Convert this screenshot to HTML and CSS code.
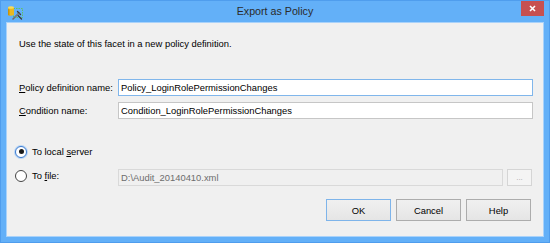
FILE: index.html
```html
<!DOCTYPE html>
<html lang="en">
<head>
<meta charset="UTF-8">
<meta name="viewport" content="width=device-width, initial-scale=1.0">
<title>Export as Policy</title>
<link rel="stylesheet" href="styles.css">
</head>
<body>
<div class="window">
    <div class="titlebar">
        <div class="title-left">
            <svg class="app-icon" width="16" height="16" viewBox="0 0 16 16">
                <rect x="6.5" y="3.5" width="9" height="9" fill="none" stroke="#5cc06a" stroke-width="1" stroke-dasharray="1.5 1"/>
                <path d="M1 2.5 V10 Q4 11.5 7 10 V2.5 Z" fill="#e8b820"/>
                <ellipse cx="4" cy="2.5" rx="3" ry="1.3" fill="#f8dc5a"/>
                <path d="M1 4 V10 Q2 10.6 2.5 10.7 V4.6 Z" fill="#c8920c"/>
                <path d="M6 14 L12 8" stroke="#6a6a6a" stroke-width="1.6" stroke-linecap="round"/>
                <path d="M10.5 6.5 L13.5 9.5 M11 10.5 L14.5 14" stroke="#3c3c3c" stroke-width="1.4" stroke-linecap="round"/>
                <path d="M12.2 8.2 L8 12.4" stroke="#8a8a8a" stroke-width="1"/>
            </svg>
        </div>
        <div class="title">Export as Policy</div>
        <div class="title-right">
            <div class="close-btn">
                <svg width="7" height="7" viewBox="0 0 7 7">
                    <path d="M1 1 L6 6 M6 1 L1 6" stroke="#fff" stroke-width="1.6"/>
                </svg>
            </div>
        </div>
    </div>

    <div class="client">
        <p class="intro">Use the state of this facet in a new policy definition.</p>

        <div class="fields">
            <div class="field-row">
                <label for="policyName"><u>P</u>olicy definition name:</label>
                <input type="text" id="policyName" class="textbox focused" value="Policy_LoginRolePermissionChanges">
            </div>
            <div class="field-row">
                <label for="conditionName"><u>C</u>ondition name:</label>
                <input type="text" id="conditionName" class="textbox" value="Condition_LoginRolePermissionChanges">
            </div>
        </div>

        <div class="targets">
            <div class="radio-row">
                <span class="radio checked"></span>
                <span class="radio-label">To local <u>s</u>erver</span>
            </div>
            <div class="radio-row file-row">
                <span class="radio"></span>
                <span class="radio-label file-label">To <u>f</u>ile:</span>
                <input type="text" class="textbox file-box" value="D:\Audit_20140410.xml" disabled>
                <button class="browse-btn" disabled>...</button>
            </div>
        </div>

        <div class="buttons">
            <button class="btn default">OK</button>
            <button class="btn">Cancel</button>
            <button class="btn">Help</button>
        </div>
    </div>
</div>
</body>
</html>
```

FILE: styles.css
```css
body {
    margin: 0;
    padding: 0;
    font-family: 'Liberation Sans', Arial, sans-serif;
    background: #ffffff;
}

.window {
    width: 550px;
    height: 243px;
    box-sizing: border-box;
    background-color: #63b0f8;
    border: 1px solid #4f9ded;
    display: flex;
    flex-direction: column;
}

.titlebar {
    height: 21px;
    display: grid;
    grid-template-columns: 1fr auto 1fr;
    align-items: start;
}

.title-left {
    padding: 4px 0 0 6px;
}

.app-icon {
    display: block;
}

.title {
    font-size: 10.7px;
    color: #2b2b2b;
    line-height: 21px;
}

.title-right {
    display: flex;
    justify-content: flex-end;
    padding-right: 5px;
}

.close-btn {
    width: 23px;
    height: 15px;
    background-color: #c75050;
    display: flex;
    justify-content: center;
    align-items: center;
}

.close-btn svg {
    display: block;
}

.client {
    flex: 1;
    margin: 0 5px 5px 5px;
    background-color: #f0f0f0;
    border: 1px solid #a9d2fa;
    padding: 0 10px 0 12px;
    display: flex;
    flex-direction: column;
    font-size: 9.4px;
    color: #000;
}

.intro {
    margin: 15px 0 0 0;
    line-height: 12px;
}

.fields {
    margin-top: 29px;
    display: flex;
    flex-direction: column;
    gap: 6px;
}

.field-row {
    display: flex;
    align-items: center;
}

.field-row label {
    width: 99px;
    flex-shrink: 0;
}

.textbox {
    height: 17px;
    box-sizing: border-box;
    border: 1px solid #c6c6c6;
    background: #fff;
    padding: 0 2px;
    margin: 0;
    font-family: inherit;
    font-size: 9.4px;
    color: #000;
    flex: 1;
    min-width: 0;
    outline: none;
}

.textbox.focused {
    border-color: #80b6eb;
}

.targets {
    margin-top: 24px;
    display: flex;
    flex-direction: column;
    gap: 9px;
}

.radio-row {
    display: flex;
    align-items: center;
    height: 17px;
}

.radio {
    width: 12px;
    height: 12px;
    box-sizing: border-box;
    border-radius: 50%;
    border: 1px solid #444;
    background: #fff;
    margin-left: -4px;
    margin-right: 5px;
    flex-shrink: 0;
    display: flex;
    justify-content: center;
    align-items: center;
}

.radio.checked {
    border-color: #3d7bd0;
    box-shadow: 0 0 0 1px #b9d6f5;
}

.radio.checked::after {
    content: "";
    width: 5px;
    height: 5px;
    border-radius: 50%;
    background: #1a1a1a;
}

.file-row .radio,
.file-row .file-label {
    margin-bottom: 4px;
}

.file-label {
    width: 86px;
}

.file-box {
    width: 385px;
    flex: none;
    background: #f0f0f0;
    border-color: #d9d9d9;
    color: #6d6d6d;
}

.browse-btn {
    width: 25px;
    height: 17px;
    margin-left: 4px;
    box-sizing: border-box;
    border: 1px solid #d5d5d5;
    background: #f4f4f4;
    color: #a8a8a8;
    font-family: inherit;
    font-size: 8px;
    padding: 0;
}

.buttons {
    margin-top: 13px;
    display: flex;
    justify-content: flex-end;
    gap: 5px;
    padding-right: 2px;
}

.btn {
    width: 65px;
    height: 22px;
    box-sizing: border-box;
    border: 1px solid #acacac;
    background: linear-gradient(#f0f0f0, #e5e5e5);
    font-family: inherit;
    font-size: 9.4px;
    color: #000;
    padding: 0;
}

.btn.default {
    border-color: #7eb4ea;
}
```
